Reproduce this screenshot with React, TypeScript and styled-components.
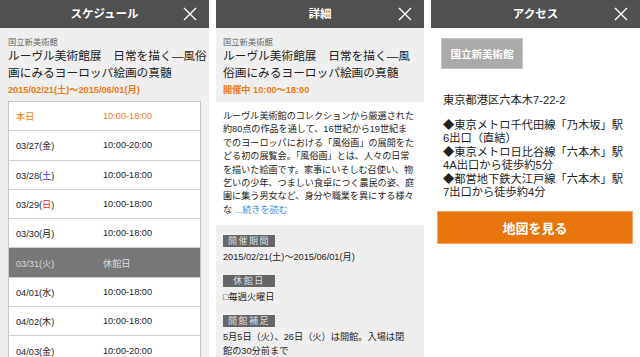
import styled, { createGlobalStyle } from 'styled-components';

const GlobalStyle = createGlobalStyle`
  html, body {
    margin: 0;
    padding: 0;
    background: #fff;
  }
  body {
    font-family: "Liberation Sans", "Noto Sans CJK JP", sans-serif;
  }
`;

const ORANGE = '#f07a12';

const Screens = styled.div`
  display: flex;
  gap: 7px;
  width: 640px;
  height: 357px;
  overflow: hidden;
`;

const Phone = styled.div<{ $w: number; $bg: string }>`
  flex: none;
  width: ${(p) => p.$w}px;
  height: 357px;
  background: ${(p) => p.$bg};
  display: flex;
  flex-direction: column;
  overflow: hidden;
`;

const Header = styled.header`
  flex: none;
  height: 28px;
  background: #505050;
  display: grid;
  grid-template-columns: 1fr auto 1fr;
  align-items: center;
  color: #fff;
  font-weight: bold;
  font-size: 11.5px;
  line-height: 28px;
`;

const HeaderTitle = styled.div`
  grid-column: 2;
`;

const Close = styled.div`
  grid-column: 3;
  justify-self: end;
  margin-right: 12px;
  display: flex;
`;

const CloseIcon = () => (
  <svg width="14" height="14" viewBox="0 0 14 14">
    <path d="M1 1 L13 13 M13 1 L1 13" stroke="#fff" strokeWidth="1.4" fill="none" />
  </svg>
);

const TopBlock = styled.div<{ $pad: string; $bg?: string }>`
  flex: none;
  padding: ${(p) => p.$pad};
  background: ${(p) => p.$bg || 'transparent'};
`;

const Venue = styled.div`
  font-size: 8.3px;
  line-height: 10px;
  color: #666;
`;

const Title = styled.div`
  margin-top: 1px;
  font-size: 11.7px;
  line-height: 16.5px;
  color: #222;
  white-space: nowrap;
`;

const Highlight = styled.div`
  margin-top: 4px;
  font-size: 9.2px;
  line-height: 10px;
  font-weight: bold;
  color: ${ORANGE};
`;

const Table = styled.div`
  margin: 6px 8px 0;
  background: #fff;
  border: 1px solid #c8c8c8;
  border-bottom: none;
`;

const Row = styled.div<{ $kind?: 'today' | 'closed' }>`
  box-sizing: border-box;
  height: 29.3px;
  display: grid;
  grid-template-columns: 87px 1fr;
  align-items: center;
  padding-left: 7px;
  border-bottom: 1.5px solid #d0d0d0;
  font-size: 9.2px;
  color: ${(p) => (p.$kind === 'today' ? ORANGE : p.$kind === 'closed' ? '#dcdcdc' : '#222')};
  background: ${(p) => (p.$kind === 'closed' ? '#777' : '#fff')};
`;

const Day = styled.span<{ $c?: string }>`
  color: ${(p) => p.$c || 'inherit'};
`;

const Desc = styled.div`
  flex: none;
  height: 123px;
  box-sizing: border-box;
  padding: 8px 7px 0;
  font-size: 9.1px;
  line-height: 13.4px;
  color: #222;
  white-space: nowrap;
`;

const More = styled.span`
  color: #3a8fe8;
`;

const InfoArea = styled.div`
  flex: 1;
  background: #efefef;
  padding: 10px 7px 0;
`;

const InfoLabel = styled.div`
  width: 52px;
  height: 12px;
  background: #666;
  color: #dedede;
  font-size: 9px;
  line-height: 12px;
  text-align: center;
  letter-spacing: 1.5px;
`;

const InfoValue = styled.div`
  margin: 3px 0 11px;
  font-size: 9.2px;
  line-height: 14px;
  color: #222;
  white-space: nowrap;
`;

const AccessBody = styled.div`
  padding: 10px 7px 0 6px;
  display: flex;
  flex-direction: column;
`;

const VenueTag = styled.div`
  align-self: flex-start;
  margin-left: 4px;
  width: 82px;
  height: 31px;
  box-sizing: border-box;
  border: 1px solid #c4c4c4;
  background: #aaa;
  color: #fff;
  font-weight: bold;
  font-size: 10.5px;
  display: flex;
  align-items: center;
  justify-content: center;
`;

const Address = styled.div`
  margin: 23px 0 0 6px;
  font-size: 11.25px;
  line-height: 16px;
  color: #222;
`;

const Lines = styled.div`
  margin: 11px 0 0 6px;
  font-size: 11.25px;
  line-height: 13.4px;
  color: #222;
  white-space: nowrap;
`;

const MapButton = styled.div`
  margin-top: 12px;
  height: 33px;
  box-sizing: border-box;
  border: 1px solid #f2a565;
  background: #e8740c;
  color: #fff;
  font-weight: bold;
  font-size: 13px;
  display: flex;
  align-items: center;
  justify-content: center;
`;

const schedule = [
  { d: '03/27', w: '金', t: '10:00-20:00' },
  { d: '03/28', w: '土', t: '10:00-18:00', c: '#2a3bf0' },
  { d: '03/29', w: '日', t: '10:00-18:00', c: '#f02a2a' },
  { d: '03/30', w: '月', t: '10:00-18:00' },
  { d: '03/31', w: '火', t: '休館日', closed: true },
  { d: '04/01', w: '水', t: '10:00-18:00' },
  { d: '04/02', w: '木', t: '10:00-18:00' },
  { d: '04/03', w: '金', t: '10:00-20:00' },
];

const Head = ({ title }: { title: string }) => (
  <Header>
    <HeaderTitle>{title}</HeaderTitle>
    <Close>
      <CloseIcon />
    </Close>
  </Header>
);

export default function App() {
  return (
    <>
      <GlobalStyle />
      <Screens>
        <Phone $w={209} $bg="#efefef">
          <Head title="スケジュール" />
          <TopBlock $pad="9px 0 0 8px">
            <Venue>国立新美術館</Venue>
            <Title>
              ルーヴル美術館展　日常を描く—風俗
              <br />
              画にみるヨーロッパ絵画の真髄
            </Title>
            <Highlight>2015/02/21(土)〜2015/06/01(月)</Highlight>
          </TopBlock>
          <Table>
            <Row $kind="today">
              <span>本日</span>
              <span>10:00-18:00</span>
            </Row>
            {schedule.map((s) => (
              <Row key={s.d} $kind={s.closed ? 'closed' : undefined}>
                <span>
                  {s.d}(<Day $c={s.c}>{s.w}</Day>)
                </span>
                <span>{s.t}</span>
              </Row>
            ))}
          </Table>
        </Phone>

        <Phone $w={208} $bg="#fff">
          <Head title="詳細" />
          <TopBlock $pad="9px 7px 7px" $bg="#efefef">
            <Venue>国立新美術館</Venue>
            <Title>
              ルーヴル美術館展　日常を描く—風
              <br />
              俗画にみるヨーロッパ絵画の真髄
            </Title>
            <Highlight>開催中 10:00〜18:00</Highlight>
          </TopBlock>
          <Desc>
            ルーヴル美術館のコレクションから厳選された
            <br />
            約80点の作品を通して、16世紀から19世紀ま
            <br />
            でのヨーロッパにおける「風俗画」の展開をた
            <br />
            どる初の展覧会。「風俗画」とは、人々の日常
            <br />
            を描いた絵画です。家事にいそしむ召使い、物
            <br />
            乞いの少年、つましい食卓につく農民の姿、庭
            <br />
            園に集う男女など、身分や職業を異にする様々
            <br />
            な <More>...続きを読む</More>
          </Desc>
          <InfoArea>
            <InfoLabel>開催期間</InfoLabel>
            <InfoValue>2015/02/21(土)〜2015/06/01(月)</InfoValue>
            <InfoLabel>休館日</InfoLabel>
            <InfoValue>□毎週火曜日</InfoValue>
            <InfoLabel>開館補足</InfoLabel>
            <InfoValue>
              5月5日（火）、26日（火）は開館。入場は閉
              <br />
              館の30分前まで
            </InfoValue>
          </InfoArea>
        </Phone>

        <Phone $w={209} $bg="#fff">
          <Head title="アクセス" />
          <AccessBody>
            <VenueTag>国立新美術館</VenueTag>
            <Address>東京都港区六本木7-22-2</Address>
            <Lines>
              ◆東京メトロ千代田線「乃木坂」駅
              <br />
              6出口（直結）
              <br />
              ◆東京メトロ日比谷線「六本木」駅
              <br />
              4A出口から徒歩約5分
              <br />
              ◆都営地下鉄大江戸線「六本木」駅
              <br />
              7出口から徒歩約4分
            </Lines>
            <MapButton>地図を見る</MapButton>
          </AccessBody>
        </Phone>
      </Screens>
    </>
  );
}
